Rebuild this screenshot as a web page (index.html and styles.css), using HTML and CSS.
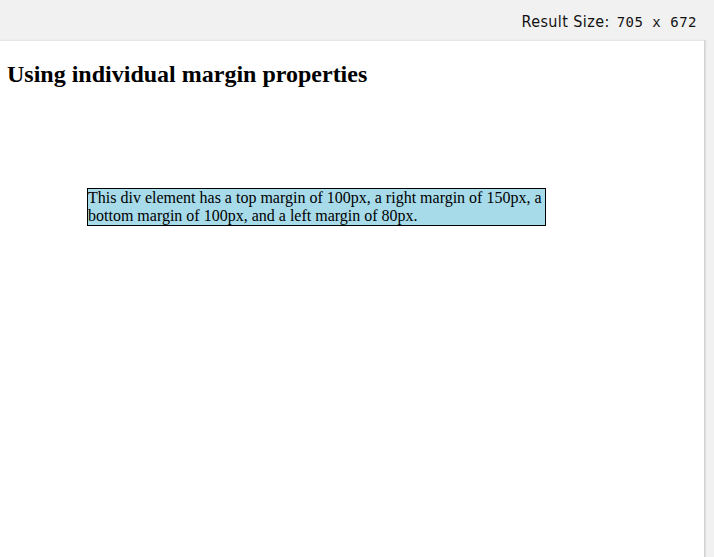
FILE: index.html
```html
<!DOCTYPE html>
<html lang="en">
<head>
<meta charset="utf-8">
<title>Using individual margin properties</title>
<link rel="stylesheet" href="styles.css">
</head>
<body>
<div class="topbar">
  <span class="size-label">Result Size: <span class="size-value">705 x 672</span></span>
</div>
<div class="frame">
  <h1 class="title">Using individual margin properties</h1>
  <div class="box">This div element has a top margin of 100px, a right margin of 150px, a bottom margin of 100px, and a left margin of 80px.</div>
</div>
</body>
</html>
```

FILE: styles.css
```css
html, body {
  margin: 0;
  padding: 0;
  height: 100%;
}
body {
  background: #f1f1f1;
  overflow: hidden;
  display: flex;
  flex-direction: column;
}
.topbar {
  height: 40px;
  flex: none;
  display: flex;
  justify-content: flex-end;
  align-items: center;
  padding-right: 17px;
  box-sizing: border-box;
}
.size-label {
  font-family: "DejaVu Sans Condensed", "DejaVu Sans", sans-serif;
  font-size: 16px;
  letter-spacing: 0.4px;
  color: #111;
  position: relative;
  top: 1px;
}
.size-value {
  font-family: "DejaVu Sans Mono", monospace;
  font-size: 14px;
  letter-spacing: 0.5px;
  margin-left: 2px;
}
.frame {
  flex: 1;
  width: 704px;
  background: #fff;
  border-top: 1px solid #e6e6e6;
  border-right: 1px solid #d4d4d4;
  box-shadow: 1px 0 1px #dedede;
  display: flow-root;
  font-family: "Liberation Serif", "Times New Roman", serif;
  color: #000;
}
.title {
  font-size: 24px;
  font-weight: bold;
  margin: 20px 0 0 7px;
  line-height: normal;
}
.box {
  margin: 100px 0 0 87px;
  width: 457px;
  font-size: 16px;
  line-height: 18px;
  background: #a7dbea;
  border: 1px solid #000;
}
```
